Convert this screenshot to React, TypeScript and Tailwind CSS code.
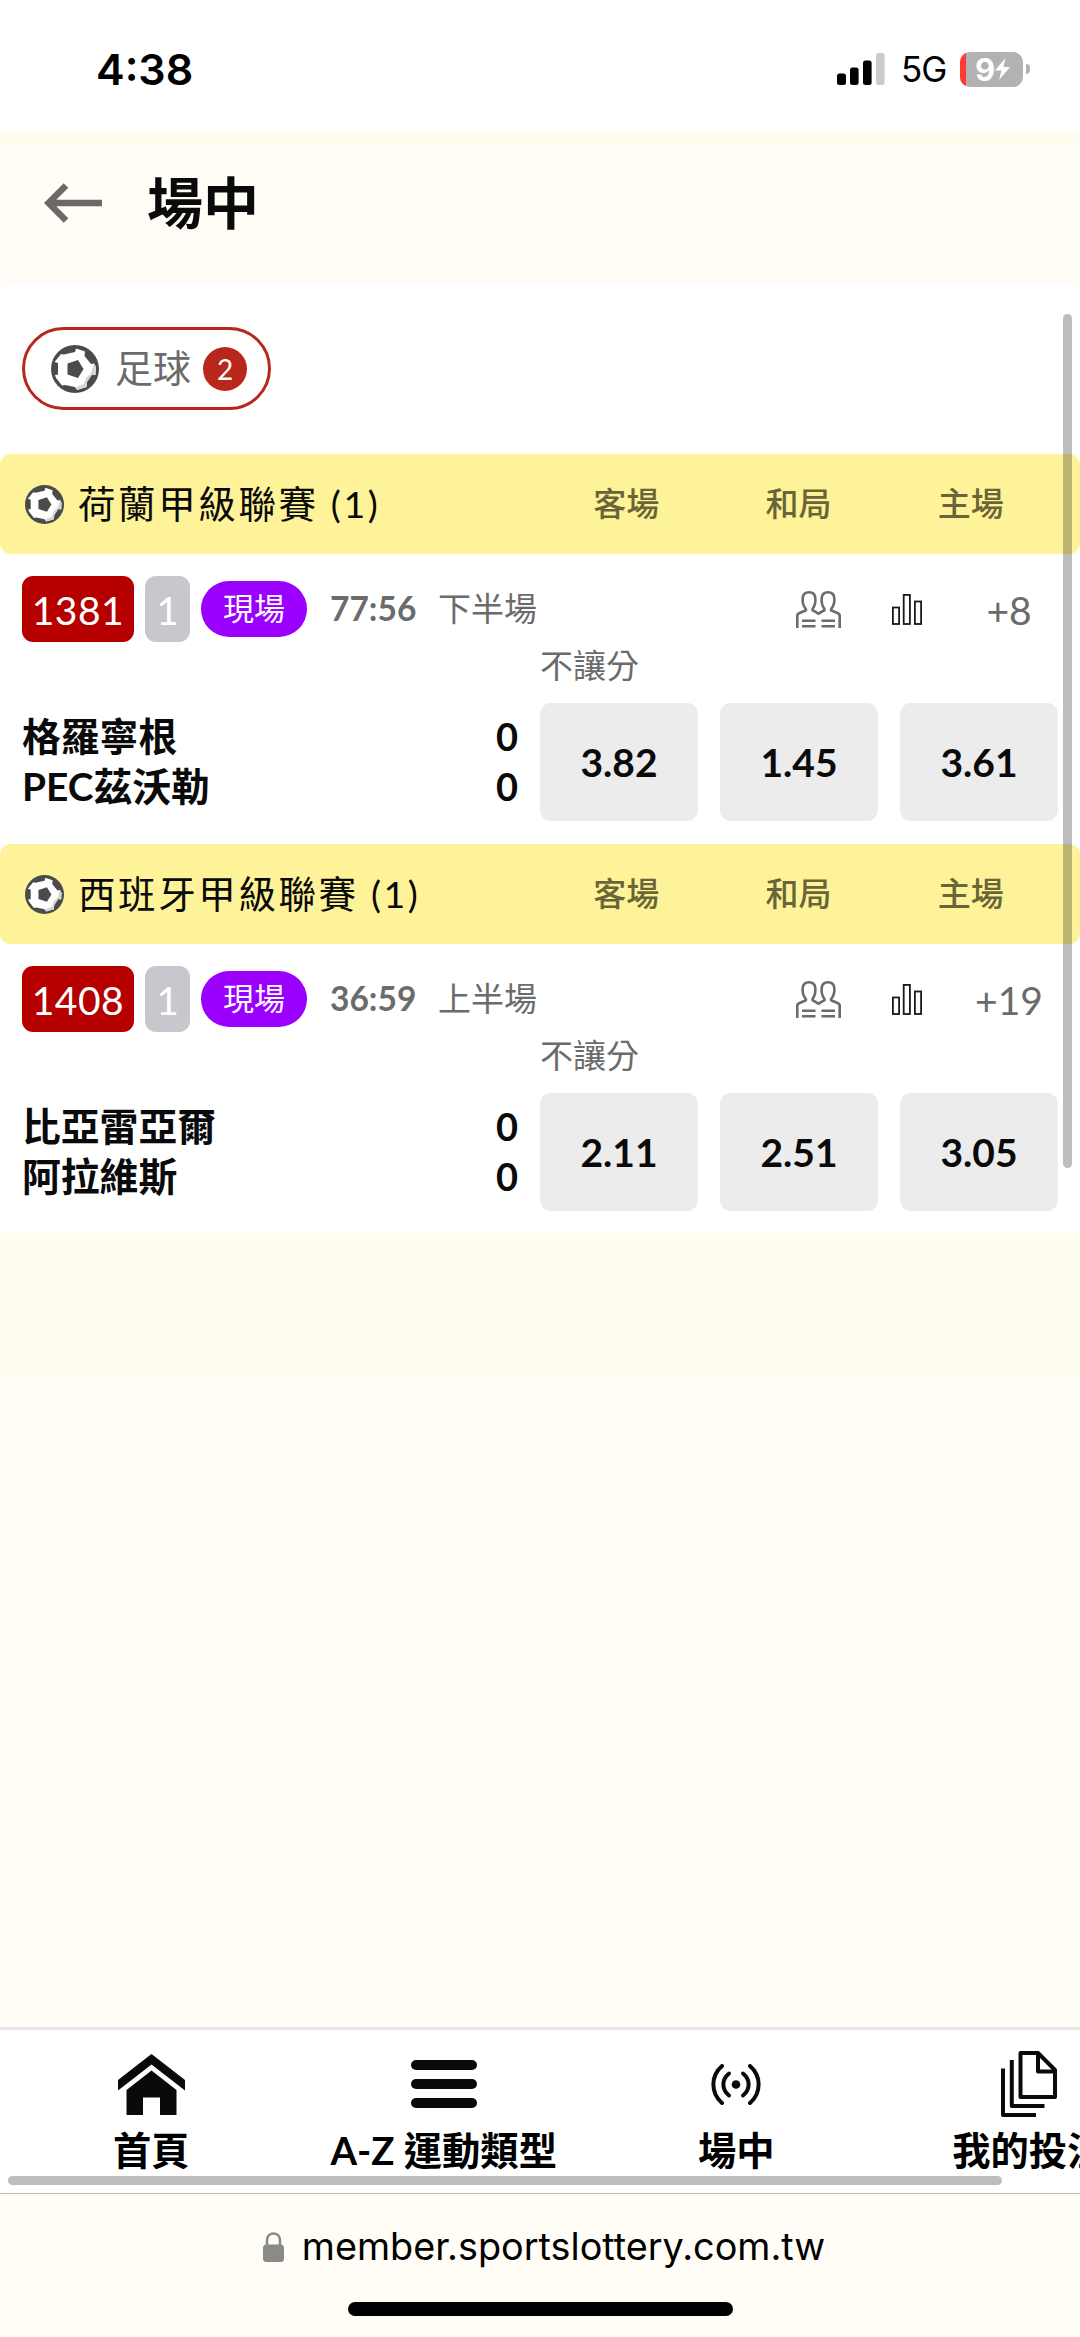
import React from "react";

interface Match {
  code: string;
  live: string;
  clock: string;
  period: string;
  more: string;
  teams: string[];
  scores: string[];
  odds: string[];
}

interface League {
  name: string;
  match: Match;
}

const leagues: League[] = [
  {
    name: "荷蘭甲級聯賽 (1)",
    match: {
      code: "1381",
      live: "1",
      clock: "77:56",
      period: "下半場",
      more: "+8",
      teams: ["格羅寧根", "PEC茲沃勒"],
      scores: ["0", "0"],
      odds: ["3.82", "1.45", "3.61"],
    },
  },
  {
    name: "西班牙甲級聯賽 (1)",
    match: {
      code: "1408",
      live: "1",
      clock: "36:59",
      period: "上半場",
      more: "+19",
      teams: ["比亞雷亞爾", "阿拉維斯"],
      scores: ["0", "0"],
      odds: ["2.11", "2.51", "3.05"],
    },
  },
];

const columns = ["客場", "和局", "主場"];

function BallIcon({ className }: { className: string }) {
  return (
    <svg viewBox="0 0 48 48" className={className}>
      <circle cx="24" cy="24" r="24" fill="#4b4b4b" />
      <path
        d="M10 9 L13 9.500 L24 7 L25 3.500 L34 6.500 L33.500 11 L40 19 L43 18.500 L45 22 L44.500 30 L41 29.500 L36 37 L35.500 42 L26 45 L24 42 L14 40 L11 40.500 L5 33 L4 30 L7 29.500 L7 18 L3.500 17 Z"
        fill="#fff"
      />
      <path d="M43 18.500 L45 22 L44.500 30 L41 29.500 L36 37 L35.500 42 L26 45 L25 42 L33 39 L35 33 L40 28 L41.500 23 Z" fill="#d6d6d6" />
      <path d="M16.500 18.500 L27 15 L32.500 24 L27 33 L16.500 29.500 Z" fill="#4b4b4b" />
    </svg>
  );
}

function LineupIcon() {
  return (
    <svg viewBox="0 0 45 37" className="h-[37px] w-[45px]" fill="none" stroke="#6b6b6b" strokeWidth="2.600">
      <path d="M1.300 37 V25 Q1.300 22.800 3.500 22 L9.500 19.500 Q10.500 19 9.500 17.500 C7 14.500 6.300 11 6.700 7 C7 3.500 9.500 1.300 13 1.300 C16.500 1.300 19 3.500 19.300 7 C19.700 11 19 14.500 16.800 17.500 Q16 19 17 19.500 L22.500 22.700 L28 19.500 Q29 19 28.200 17.500 C26 14.500 25.300 11 25.700 7 C26 3.500 28.500 1.300 32 1.300 C35.500 1.300 38 3.500 38.300 7 C38.700 11 38 14.500 35.500 17.500 Q34.500 19 35.500 19.500 L41.500 22 Q43.700 22.800 43.700 25 V37" />
      <path d="M6 29.700 H19.500 M6 35.200 H19.500 M25.500 29.700 H39 M25.500 35.200 H39" />
    </svg>
  );
}

function StatsIcon() {
  return (
    <svg viewBox="0 0 30 31" className="h-[31px] w-[30px]" fill="none" stroke="#1a1a1a" strokeWidth="1.800">
      <rect x="0.900" y="13.500" width="6.200" height="16.500" />
      <rect x="11.700" y="0.900" width="6.200" height="29.100" />
      <rect x="22.900" y="7.500" width="6.200" height="22.500" />
    </svg>
  );
}

function StatusBar() {
  return (
    <header className="flex h-[130px] items-start justify-between bg-white pt-[42px] pr-[50px] pl-24 font-[Inter,sans-serif] text-black">
      <span className="text-[43px] leading-[54px] font-semibold">4:38</span>
      <div className="flex h-[54px] items-center">
        <svg viewBox="0 0 48 32" className="mr-4 h-8 w-12">
          <rect x="0" y="20.500" width="9" height="11.500" rx="2.500" />
          <rect x="13" y="14.500" width="8.600" height="17.500" rx="2.500" />
          <rect x="26" y="7.500" width="8.600" height="24.500" rx="2.500" />
          <rect x="39" y="0" width="8.600" height="32" rx="2.500" fill="#cbcbcb" />
        </svg>
        <span className="w-[59px] text-[35px] tracking-[-1px]">5G</span>
        <div className="flex h-[35px] w-[63px] items-center overflow-hidden rounded-[10px] bg-[#b2b2b2]">
          <span className="h-full w-1.5 bg-[#ff3b30]" />
          <span className="ml-[9px] text-[31px] leading-[35px] font-bold text-white">9</span>
          <svg viewBox="0 0 15 22" className="h-[22px] w-[15px]" fill="#fff">
            <path d="M10.500 0 L0 12.500 H6.500 L4 22 L15 9 H8.500 Z" />
          </svg>
        </div>
        <span className="ml-[3px] h-2.5 w-1 rounded-r-full bg-[#b2b2b2]" />
      </div>
    </header>
  );
}

function MatchRow({ match }: { match: Match }) {
  return (
    <div className="h-[290px] pr-[22px] pl-[22px] pt-[22px]">
      <div className="flex h-[66px] items-center">
        <span className="flex h-[66px] w-28 items-center justify-center rounded-[11px] bg-[#b60000] pt-0.5 text-[39px] leading-none tracking-[0.500px] text-white">
          {match.code}
        </span>
        <span className="ml-[11px] flex h-[66px] w-[45px] items-center justify-center rounded-[11px] bg-[#c8c7ce] pt-0.5 text-[39px] leading-none text-white">
          {match.live}
        </span>
        <span className="ml-[11px] flex h-14 w-[106px] items-center justify-center rounded-full bg-[#9b00ff] pb-px text-[31px] leading-none text-white">
          現場
        </span>
        <span className="ml-[23px] w-[108px] text-[33.500px] leading-none font-bold text-[#6b6b6b]">{match.clock}</span>
        <span className="pb-0.5 text-[33px] leading-none text-[#6b6b6b]">{match.period}</span>
        <div className="ml-auto flex items-center">
          <LineupIcon />
          <span className="ml-[51px]">
            <StatsIcon />
          </span>
          <span className="ml-[38px] w-[98px] pt-0.5 text-center text-[39px] leading-none text-[#6b6b6b]">
            {match.more}
          </span>
        </div>
      </div>
      <div className="pl-[518px] text-[33px] leading-[47px] text-[#6b6b6b]">不讓分</div>
      <div className="mt-3.5 flex items-center">
        <div className="flex-1 pb-0.5 text-[38.800px] leading-[50px] font-bold text-[#0a0a0a]">
          {match.teams.map((team, i) => (
            <div key={team} className="flex justify-between pr-[22px]">
              <span>{team}</span>
              <span className="text-[38px]">{match.scores[i]}</span>
            </div>
          ))}
        </div>
        <div className="flex gap-[22px]">
          {match.odds.map((odd) => (
            <button
              key={odd}
              className="h-[118px] w-[158px] rounded-[11px] bg-[#ececec] text-[39px] leading-none font-bold text-[#0a0a0a]"
            >
              {odd}
            </button>
          ))}
        </div>
      </div>
    </div>
  );
}

function LeagueSection({ league }: { league: League }) {
  return (
    <section>
      <div className="flex h-[100px] items-center rounded-[11px] bg-[#fef399] pl-[25px]">
        <BallIcon className="h-[39px] w-[39px]" />
        <h2 className="ml-3.5 flex-1 text-[37.500px] leading-none tracking-[2.600px] text-[#0a0a0a]">{league.name}</h2>
        <div className="mr-[23px] flex w-[517px] pb-0.5">
          {columns.map((col) => (
            <span key={col} className="flex-1 text-center text-[33px] leading-none font-medium text-[#6a6538]">
              {col}
            </span>
          ))}
        </div>
      </div>
      <MatchRow match={league.match} />
    </section>
  );
}

function NavItem({ label, children }: { label: string; children: React.ReactNode }) {
  return (
    <a className="flex w-[292.500px] shrink-0 flex-col items-center">
      <div className="flex h-[66px] items-center justify-center">{children}</div>
      <span className="mt-[3px] text-[38.300px] leading-[60px] font-bold whitespace-nowrap text-black">{label}</span>
    </a>
  );
}

function BottomNav() {
  return (
    <nav className="relative flex h-[167px] overflow-hidden border-t-[3px] border-b border-t-[#e6e6e6] border-b-[#bdbdbd] bg-white pt-[21px] pl-[5px]">
      <NavItem label="首頁">
        <svg viewBox="0 0 67 61" className="h-[61px] w-[67px]" fill="#0a0a0a">
          <path d="M33.500 0 L67 26 V36.500 L33.500 10.500 L0 36.500 V26 Z" />
          <path d="M33.500 16.500 L58.500 36 V61 H42 V43.500 H25 V61 H8.500 V36 Z" />
        </svg>
      </NavItem>
      <NavItem label="A-Z 運動類型">
        <div className="flex flex-col gap-[9px]">
          <span className="h-2.5 w-[66px] rounded-full bg-[#0a0a0a]" />
          <span className="h-2.5 w-[66px] rounded-full bg-[#0a0a0a]" />
          <span className="h-2.5 w-[66px] rounded-full bg-[#0a0a0a]" />
        </div>
      </NavItem>
      <NavItem label="場中">
        <svg viewBox="0 0 50 41" className="h-[41px] w-[50px]" fill="none" stroke="#0a0a0a" strokeWidth="4" strokeLinecap="round">
          <circle cx="25" cy="20.500" r="4.300" fill="#0a0a0a" stroke="none" />
          <path d="M11 2 C-0.500 12 -0.500 29 11 39 M39 2 C50.500 12 50.500 29 39 39" />
          <path d="M18 9.500 C10.500 15.500 10.500 25.500 18 31.500 M32 9.500 C39.500 15.500 39.500 25.500 32 31.500" />
        </svg>
      </NavItem>
      <NavItem label="我的投注">
        <svg viewBox="0 0 56 66" className="h-[66px] w-14" fill="none" stroke="#0a0a0a" strokeWidth="4" strokeLinejoin="round">
          <path d="M19.500 2 H37 L54 19 V46 H19.500 Z" />
          <path d="M37 2 V20.500 H54" />
          <path d="M10.800 9 V55 H43.500 M2 17.500 V64 H35" />
        </svg>
      </NavItem>
      <span className="absolute top-[146px] left-2 h-[9px] w-[994px] rounded-full bg-black/26" />
    </nav>
  );
}

export default function App() {
  return (
    <div className="flex h-[2337px] w-[1080px] flex-col overflow-hidden bg-[#fffdf5] font-[Lato,'Noto_Sans_CJK_TC',sans-serif]">
      <StatusBar />
      <div className="h-3.5 bg-[#fffdef]" />
      <div className="flex h-[139px] items-center pb-[22px] pl-11">
        <svg viewBox="0 0 58 40" className="h-10 w-[58px]" fill="none" stroke="#6b6a66" strokeWidth="6.500">
          <path d="M58 20 H5 M22 2.500 L4.500 20 L22 37.500" />
        </svg>
        <h1 className="ml-[45px] text-[56px] leading-none font-bold text-[#0a0a0a]">場中</h1>
      </div>
      <main className="relative h-[950px] rounded-t-[11px] bg-white pt-11">
        <button className="ml-[22px] flex h-[83px] w-[249px] items-center rounded-full border-[3px] border-[#b9271c] pl-[26px]">
          <BallIcon className="h-12 w-12" />
          <span className="ml-4 pb-[3px] text-[38px] leading-none text-[#6b6b6b]">足球</span>
          <span className="ml-3 flex h-11 w-11 items-center justify-center rounded-full bg-[#b9271c] text-[28px] leading-none text-white">
            2
          </span>
        </button>
        <div className="mt-11">
          {leagues.map((league) => (
            <LeagueSection key={league.name} league={league} />
          ))}
        </div>
        <span className="absolute top-[31px] right-2 h-[854px] w-[9px] rounded-full bg-black/26" />
      </main>
      <div className="h-[147px] bg-[#fffdef]" />
      <div className="flex-1" />
      <BottomNav />
      <footer className="flex h-[143px] flex-col items-center font-[Inter,sans-serif]">
        <div className="mt-[30px] flex h-[46px] items-center pl-2">
          <svg viewBox="0 0 21 30" className="mr-[18px] h-[30px] w-[21px]">
            <rect x="0" y="12.500" width="21" height="17.500" rx="3.500" fill="#8a8a88" />
            <path d="M4 14 V8.500 C4 -0.800 17 -0.800 17 8.500 V14" fill="none" stroke="#8a8a88" strokeWidth="2.600" />
          </svg>
          <span className="text-[37.800px] leading-none text-black">member.sportslottery.com.tw</span>
        </div>
        <span className="mt-8 h-3.5 w-[385px] rounded-full bg-black" />
      </footer>
    </div>
  );
}
